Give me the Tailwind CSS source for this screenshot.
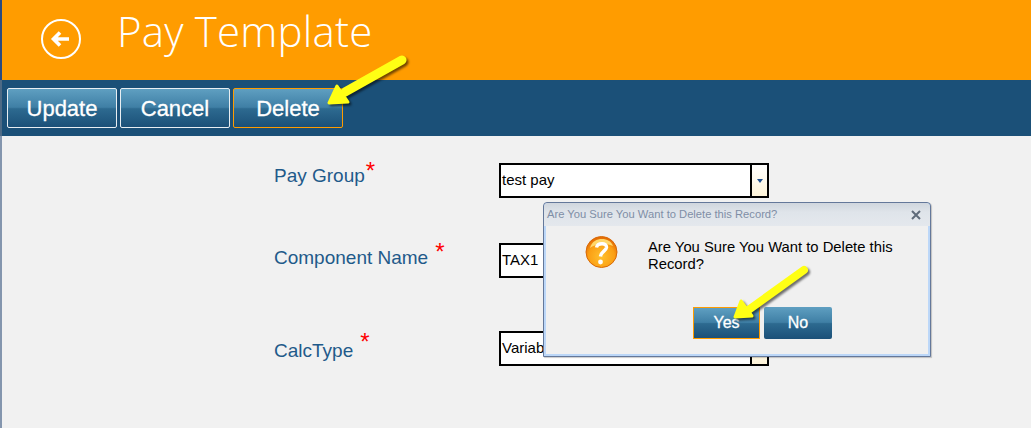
<!DOCTYPE html>
<html>

<head>
    <title>Pay Template</title>
    <script src="https://cdn.jsdelivr.net/npm/@tailwindcss/browser@4"></script>
</head>

<body class="bg-[#f1f1f1] font-['Liberation_Sans',sans-serif]">
    <div class="relative w-[1031px] h-[428px] overflow-hidden">

        <!-- header -->
        <div class="h-[80px] bg-[#ff9c00] border-l-2 border-[#2a4a80] flex items-start pl-[38px]">
            <svg class="mt-[18px]" width="42" height="42" viewBox="0 0 42 42" fill="none" stroke="white">
                <circle cx="21" cy="21" r="19" stroke-width="2" />
                <path d="M29 21H14M20 14.5L13.5 21L20 27.5" stroke-width="3.6" />
            </svg>
            <h1 class="ml-[35px] mt-[6px] text-[42px] leading-[50px] font-light text-white tracking-[0.2px] font-['Open_Sans',sans-serif]">Pay Template</h1>
        </div>

        <!-- toolbar -->
        <div class="h-[56px] bg-[#1b5078] border-l-2 border-[#4d6a85] flex items-start gap-[3px] pl-[5px] pt-[8px]">
            <button class="w-[110px] h-[40px] rounded-[2px] border border-[#e8eef2] text-white text-[22px] [-webkit-text-stroke:0.3px_white] bg-[linear-gradient(#5f9fc1_0%,#3f7fa5_48%,#2d6a90_52%,#1b5078_100%)]">Update</button>
            <button class="w-[110px] h-[40px] rounded-[2px] border border-[#e8eef2] text-white text-[22px] [-webkit-text-stroke:0.3px_white] bg-[linear-gradient(#5f9fc1_0%,#3f7fa5_48%,#2d6a90_52%,#1b5078_100%)]">Cancel</button>
            <button class="w-[110px] h-[40px] rounded-[2px] border border-[#ff9c00] text-white text-[22px] [-webkit-text-stroke:0.3px_white] bg-[linear-gradient(#5f9fc1_0%,#3f7fa5_48%,#2d6a90_52%,#1b5078_100%)]">Delete</button>
        </div>

        <!-- form -->
        <div class="h-[292px] border-l-2 border-[#8496ae] pl-[272px] pt-[27px]">
            <div class="flex items-start h-[80px]">
                <div class="w-[225px] flex text-[19px] leading-[24px] text-[#1f5a8a]">
                    <span class="mt-[1px]">Pay Group</span>
                    <span class="ml-[1px] -mt-[4px] text-[24px] text-[#ff0000]">*</span>
                </div>
                <div class="w-[270px] h-[35px] border-2 border-black bg-white flex items-center justify-between text-[15px] text-black pl-[1px]">
                    <span>test pay</span>
                    <div class="w-[17px] h-full border-l-2 border-black bg-[linear-gradient(#ffffff,#fdf3d8)] flex items-center justify-center">
                        <div class="w-0 h-0 border-x-[3px] border-x-transparent border-t-[4px] border-t-[#1f4f8f]"></div>
                    </div>
                </div>
            </div>
            <div class="flex items-start h-[88px]">
                <div class="w-[225px] flex text-[19px] leading-[24px] text-[#1f5a8a]">
                    <span class="mt-[3px]">Component Name</span>
                    <span class="ml-[7px] -mt-[3px] text-[24px] text-[#ff0000]">*</span>
                </div>
                <div class="w-[270px] h-[35px] border-2 border-black bg-white flex items-center text-[15px] text-black pl-[1px]">
                    <span>TAX1</span>
                </div>
            </div>
            <div class="flex items-start">
                <div class="w-[225px] flex text-[19px] leading-[24px] text-[#1f5a8a]">
                    <span class="mt-[8px]">CalcType</span>
                    <span class="ml-[7px] -mt-[1px] text-[24px] text-[#ff0000]">*</span>
                </div>
                <div class="w-[270px] h-[35px] border-2 border-black bg-white flex items-center justify-between text-[15px] text-black pl-[1px]">
                    <span>Variable</span>
                    <div class="w-[17px] h-full border-l-2 border-black bg-[linear-gradient(#ffffff,#fdf3d8)]"></div>
                </div>
            </div>
        </div>

        <!-- confirm dialog -->
        <div class="absolute left-[543px] top-[202px] w-[388px] h-[155px] rounded-t-[4px] border border-[#64789a] bg-[#bcd7f8] shadow-[1px_1px_1px_rgba(0,0,0,0.2)] flex flex-col">
            <div class="h-[23px] rounded-t-[4px] bg-[linear-gradient(#d0d6de,#dfe4ea_40%,#e4e8ed)] flex items-center justify-between pl-[3px] pr-[9px]">
                <span class="text-[11.2px] text-[#7f8ea6]">Are You Sure You Want to Delete this Record?</span>
                <svg width="10" height="10" viewBox="0 0 10 10" stroke="#5f6b7a" stroke-width="2"><path d="M1 1L9 9M9 1L1 9" /></svg>
            </div>
            <div class="flex-1 mx-[2px] mb-[2px] bg-[#f0f0f0] relative">
                <div class="flex pl-[39px] pt-[10px]">
                    <svg class="shrink-0" width="33" height="32" viewBox="0 0 33 32">
                        <defs>
                            <radialGradient id="q" cx="0.5" cy="0.65" r="0.6">
                                <stop offset="0" stop-color="#ffc02e" />
                                <stop offset="0.7" stop-color="#fb9f14" />
                                <stop offset="1" stop-color="#e56d05" />
                            </radialGradient>
                        </defs>
                        <circle cx="16.5" cy="16" r="15.5" fill="url(#q)" stroke="#d86a08" stroke-width="1" />
                        <path d="M5 12C7 5 12 3 17 3C22 3 26 5 28 10C22 7 11 7 5 12Z" fill="#ffd86a" />
                        <path d="M11.5 11.5C12.5 6.5 22 6.5 21.5 11.5C21 15 16 15.5 15.5 20.5" fill="none" stroke="#ffffff" stroke-width="3.4" />
                        <circle cx="15.5" cy="26" r="2.4" fill="#ffffff" />
                    </svg>
                    <p class="ml-[30px] mt-[3px] w-[262px] text-[14.8px] leading-[17px] text-black">Are You Sure You Want to Delete this Record?</p>
                </div>
                <div class="absolute left-[147px] top-[81px] flex gap-[4px]">
                    <button class="w-[67px] h-[32px] border border-[#ff9c00] text-white text-[16px] [-webkit-text-stroke:0.3px_white] bg-[linear-gradient(#5f9fc1_0%,#3f7fa5_48%,#2d6a90_52%,#1b5078_100%)]">Yes</button>
                    <button class="w-[68px] h-[32px] rounded-[2px] text-white text-[16px] [-webkit-text-stroke:0.3px_white] bg-[linear-gradient(#5f9fc1_0%,#3f7fa5_48%,#2d6a90_52%,#1b5078_100%)]">No</button>
                </div>
            </div>
        </div>

        <!-- yellow arrows -->
        <svg class="absolute left-0 top-0 pointer-events-none drop-shadow-[2px_2px_1px_rgba(0,0,0,0.55)]" width="1031" height="428" fill="none" stroke="#ffff14" stroke-linejoin="round">
            <path d="M402 60L345 92" stroke-width="9" stroke-linecap="round" />
            <path d="M329 103L337 86L348 102Z" fill="#ffff14" stroke-width="3" />
            <path d="M804 270L747 311" stroke-width="8" stroke-linecap="round" />
            <path d="M735 317L741 301L752 316Z" fill="#ffff14" stroke-width="3" />
        </svg>
    </div>
</body>

</html>
